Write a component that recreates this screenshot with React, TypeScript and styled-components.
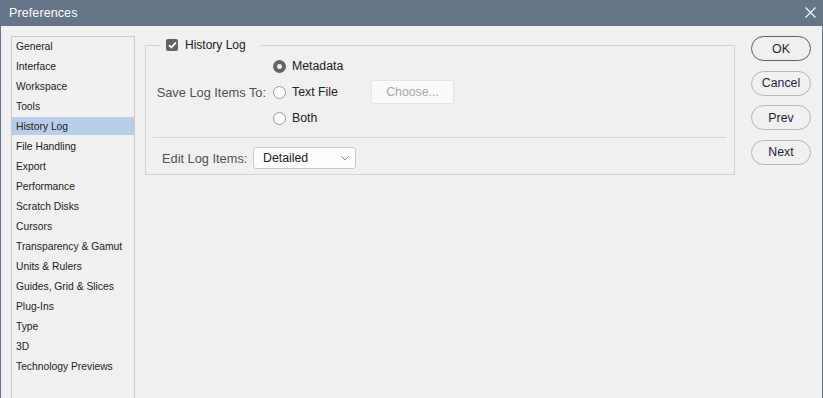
import styled, { createGlobalStyle } from 'styled-components'

const GlobalStyle = createGlobalStyle`
  html, body {
    margin: 0;
    padding: 0;
    background: #f0f0f0;
  }
  * {
    box-sizing: border-box;
  }
`

const categories = [
  'General',
  'Interface',
  'Workspace',
  'Tools',
  'History Log',
  'File Handling',
  'Export',
  'Performance',
  'Scratch Disks',
  'Cursors',
  'Transparency & Gamut',
  'Units & Rulers',
  'Guides, Grid & Slices',
  'Plug-Ins',
  'Type',
  '3D',
  'Technology Previews'
]

const saveTargets = ['Metadata', 'Text File', 'Both']

const App = () => {
  return (
    <Window>
      <GlobalStyle />
      <TitleBar>
        <Title>Preferences</Title>
        <CloseIcon width="11" height="11" viewBox="0 0 11 11">
          <path d="M0.5 0.5 L10.5 10.5 M10.5 0.5 L0.5 10.5" stroke="#fff" strokeWidth="1.1" />
        </CloseIcon>
      </TitleBar>

      <Body>
        <Sidebar>
          {categories.map((name) => (
            <SidebarItem key={name} $active={name === 'History Log'}>
              {name}
            </SidebarItem>
          ))}
        </Sidebar>

        <Group>
          <Legend>
            <Checkbox>
              <svg width="9" height="8" viewBox="0 0 9 8">
                <path d="M1 4.2 L3.4 6.5 L8 1.3" stroke="#fff" strokeWidth="1.8" fill="none" />
              </svg>
            </Checkbox>
            <LegendText>History Log</LegendText>
          </Legend>

          <SaveRow>
            <FieldLabel $width={111}>Save Log Items To:</FieldLabel>
            <RadioList>
              {saveTargets.map((target) => (
                <RadioRow key={target}>
                  <Radio $checked={target === 'Metadata'} />
                  <RadioText>{target}</RadioText>
                  {target === 'Text File' && <ChooseButton>Choose...</ChooseButton>}
                </RadioRow>
              ))}
            </RadioList>
          </SaveRow>

          <Separator />

          <EditRow>
            <FieldLabel $width={85}>Edit Log Items:</FieldLabel>
            <SelectBox>
              <span>Detailed</span>
              <svg width="8" height="5" viewBox="0 0 8 5">
                <path d="M0.5 0.5 L4 4 L7.5 0.5" stroke="#8a8a8a" strokeWidth="1" fill="none" />
              </svg>
            </SelectBox>
          </EditRow>
        </Group>

        <Actions>
          <ActionButton $primary>OK</ActionButton>
          <ActionButton>Cancel</ActionButton>
          <ActionButton>Prev</ActionButton>
          <ActionButton>Next</ActionButton>
        </Actions>
      </Body>
    </Window>
  )
}

export default App

const Window = styled.div({
  width: 823,
  height: 398,
  display: 'flex',
  flexDirection: 'column',
  overflow: 'hidden',
  borderLeft: '1px solid #657489',
  borderRight: '1px solid #657489',
  background: '#f0f0f0',
  fontFamily: '"Liberation Sans", Arial, sans-serif'
})
const TitleBar = styled.div({
  height: 26,
  flexShrink: 0,
  display: 'flex',
  alignItems: 'center',
  justifyContent: 'space-between',
  padding: '0 6px 0 8px',
  background: '#657489'
})
const Title = styled.span({
  color: '#fff',
  fontSize: 12.5,
  letterSpacing: 0.1
})
const CloseIcon = styled.svg({
  display: 'block',
  marginTop: -2
})
const Body = styled.div({
  flex: 1,
  display: 'flex',
  alignItems: 'flex-start',
  padding: '10px 11px 0 10px',
  gap: 10
})
const Sidebar = styled.div({
  width: 124,
  alignSelf: 'stretch',
  marginBottom: -10,
  border: '1px solid #c9c9c9',
  borderBottom: 'none',
  display: 'flex',
  flexDirection: 'column',
  gap: 2
})
const SidebarItem = styled.div<{ $active?: boolean }>`
  height: 18px;
  line-height: 20px;
  padding-left: 4px;
  font-size: 10.3px;
  color: #1c1c1c;
  white-space: nowrap;
  background: ${(p) => (p.$active ? '#b7cde8' : 'transparent')};
`
const Group = styled.fieldset({
  flex: 1,
  margin: '2px 0 0',
  padding: '0 0 5px',
  border: '1px solid #d3d3d3',
  minWidth: 0
})
const Legend = styled.legend({
  marginLeft: 14,
  padding: '0 14px 0 6px',
  display: 'flex',
  alignItems: 'center',
  gap: 7,
  height: 14
})
const Checkbox = styled.span({
  width: 12,
  height: 12,
  borderRadius: 2,
  background: '#626262',
  display: 'flex',
  alignItems: 'center',
  justifyContent: 'center'
})
const LegendText = styled.span({
  fontSize: 12,
  color: '#222'
})
const SaveRow = styled.div({
  display: 'flex',
  alignItems: 'center',
  paddingLeft: 9,
  marginTop: 1,
  gap: 7
})
const FieldLabel = styled.span<{ $width?: number }>`
  font-size: 12.8px;
  color: #505050;
  white-space: nowrap;
  text-align: right;
  ${(p) => (p.$width ? `width: ${p.$width}px;` : '')}
`
const RadioList = styled.div({
  display: 'flex',
  flexDirection: 'column'
})
const RadioRow = styled.div({
  height: 26,
  display: 'flex',
  alignItems: 'center'
})
const Radio = styled.span<{ $checked?: boolean }>`
  width: 13px;
  height: 13px;
  border-radius: 50%;
  flex-shrink: 0;
  background: ${(p) => (p.$checked ? '#ececec' : '#fbfbfb')};
  border: ${(p) => (p.$checked ? '4px solid #626262' : '1px solid #9d9d9d')};
`
const RadioText = styled.span({
  marginLeft: 6,
  width: 79,
  fontSize: 12.3,
  color: '#222'
})
const ChooseButton = styled.div({
  width: 83,
  height: 24,
  display: 'flex',
  alignItems: 'center',
  justifyContent: 'center',
  background: '#fafafa',
  border: '1px solid #e4e4e4',
  borderRadius: 2,
  fontSize: 12.3,
  color: '#a8a8a8'
})
const Separator = styled.div({
  height: 1,
  margin: '6px 8px 0 7px',
  background: '#d6d6d6'
})
const EditRow = styled.div({
  display: 'flex',
  alignItems: 'center',
  gap: 6,
  margin: '9px 0 0',
  paddingLeft: 16
})
const SelectBox = styled.div({
  width: 103,
  height: 22,
  display: 'flex',
  alignItems: 'center',
  justifyContent: 'space-between',
  padding: '0 6px 0 9px',
  background: '#fdfdfd',
  border: '1px solid #c8c8c8',
  borderRadius: 3,
  fontSize: 12.3,
  color: '#222'
})
const Actions = styled.div({
  width: 60,
  marginLeft: 6,
  display: 'flex',
  flexDirection: 'column',
  gap: 9.5
})
const ActionButton = styled.div<{ $primary?: boolean }>`
  height: 25px;
  display: flex;
  align-items: center;
  justify-content: center;
  border-radius: 13px;
  border: 1px solid ${(p) => (p.$primary ? '#5e5e5e' : '#b5b5b5')};
  background: #f0f0f0;
  font-size: 12.3px;
  color: #1e1e3a;
`
